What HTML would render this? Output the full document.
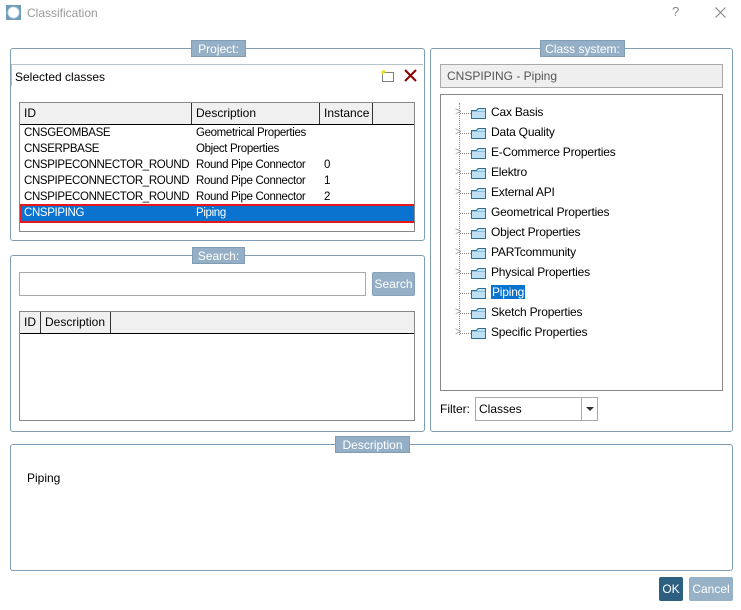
<!DOCTYPE html>
<html><head><style>
*{margin:0;padding:0;box-sizing:border-box}
body{width:741px;height:610px;background:#fff;font-family:"Liberation Sans",sans-serif;font-size:12px;color:#000;position:relative;overflow:hidden}
.a{position:absolute}
.panel{position:absolute;border:1px solid #7f9db3;border-radius:3px}
.leg{position:absolute;background:#95b0c6;color:#fff;font-size:12px;text-align:center;line-height:17px;height:17px;border:1px solid #7f9db3}
.t{position:absolute;white-space:nowrap;line-height:14px}
.tb .t{font-size:11.5px;letter-spacing:-0.35px}
.hd{position:absolute;background:#f0f0f0;border-right:1px solid #333;height:21px;line-height:21px;padding-left:4px;top:0}
.tree .t{left:50px;letter-spacing:-0.2px}
.fold{position:absolute;left:30px;width:15px;height:12px}
.chev{position:absolute;left:14px;color:#999;font-size:11px}
.dot{position:absolute;left:19px;width:11px;border-top:1px dotted #888}
</style></head><body>
<svg width="0" height="0" style="position:absolute"><defs><symbol id="f" viewBox="0 0 15 12"><path d="M0.5 3.5 L0.5 11.5 L14.5 11.5 L14.5 1.5 L7 1.5 L5.5 3.5 Z" fill="#bfe0f3" stroke="#2f6e95"/><path d="M1 4.5 H14" stroke="#8bc0de"/></symbol></defs></svg>
<svg class="a" style="left:6px;top:5px" width="15" height="15"><rect width="15" height="15" fill="#6e9bb8"/><circle cx="7.5" cy="7.5" r="5.5" fill="#fff" stroke="#cfdde6"/></svg>
<div class="t" style="left:27px;top:6px;color:#999;font-size:12px">Classification</div>
<div class="t" style="left:672px;top:5px;color:#888;font-size:13px">?</div>
<svg class="a" style="left:715px;top:7px" width="11" height="11"><path d="M0.5 0.5 L10.5 10.5 M10.5 0.5 L0.5 10.5" stroke="#888" stroke-width="1.2"/></svg>

<!-- Project -->
<div class="panel" style="left:10px;top:48px;width:415px;height:193px"></div>
<div class="leg" style="left:191px;top:40px;width:55px">Project:</div>
<div class="a" style="left:11px;top:64px;width:412px;border-top:1px solid #b8c4cc"></div>
<div class="a" style="left:11px;top:64px;height:22px;border-left:1px solid #b8c4cc"></div>
<div class="t" style="left:15px;top:70px">Selected classes</div>
<svg class="a" style="left:380px;top:69px" width="15" height="14"><rect x="2.5" y="3.5" width="11" height="9" fill="none" stroke="#000" stroke-dasharray="1 1"/><path d="M3 1 L4 4 M1 3 L6 3 M1.5 5.5 L5 1.5" stroke="#f0e000" stroke-width="1.2"/></svg>
<svg class="a" style="left:404px;top:69px" width="13" height="13"><path d="M1 1 L12 12 M12 1 L1 12" stroke="#8b0000" stroke-width="2"/></svg>
<div class="a tb" style="left:19px;top:102px;width:396px;height:130px;border:1px solid #888;overflow:hidden">
 <div class="a" style="left:0;top:0;width:396px;height:22px;background:#f0f0f0;border-bottom:1px solid #000"></div>
 <div class="hd" style="left:0;width:172px">ID</div>
 <div class="hd" style="left:172px;width:128px">Description</div>
 <div class="hd" style="left:300px;width:53px">Instance</div>
 <div class="t" style="left:4px;top:23px">CNSGEOMBASE</div><div class="t" style="left:176px;top:23px">Geometrical Properties</div>
 <div class="t" style="left:4px;top:39px">CNSERPBASE</div><div class="t" style="left:176px;top:39px">Object Properties</div>
 <div class="t" style="left:4px;top:55px">CNSPIPECONNECTOR_ROUND</div><div class="t" style="left:176px;top:55px">Round Pipe Connector</div><div class="t" style="left:304px;top:55px">0</div>
 <div class="t" style="left:4px;top:71px">CNSPIPECONNECTOR_ROUND</div><div class="t" style="left:176px;top:71px">Round Pipe Connector</div><div class="t" style="left:304px;top:71px">1</div>
 <div class="t" style="left:4px;top:87px">CNSPIPECONNECTOR_ROUND</div><div class="t" style="left:176px;top:87px">Round Pipe Connector</div><div class="t" style="left:304px;top:87px">2</div>
 <div class="a" style="left:-1px;top:101px;width:397px;height:19px;background:#0a73d0;border:2px solid #e8161b"></div>
 <div class="t" style="left:4px;top:103px;color:#fff">CNSPIPING</div><div class="t" style="left:176px;top:103px;color:#fff">Piping</div>
</div>

<!-- Search -->
<div class="panel" style="left:10px;top:255px;width:415px;height:177px"></div>
<div class="leg" style="left:192px;top:247px;width:53px">Search:</div>
<div class="a" style="left:19px;top:272px;width:347px;height:24px;border:1px solid #aaa"></div>
<div class="a" style="left:372px;top:272px;width:43px;height:24px;background:#95b0c6;border:1px solid #86a2b8;border-radius:2px;color:#fff;text-align:center;line-height:22px">Search</div>
<div class="a" style="left:19px;top:311px;width:396px;height:110px;border:1px solid #888;overflow:hidden">
 <div class="a" style="left:0;top:0;width:396px;height:22px;background:#f0f0f0;border-bottom:1px solid #000"></div>
 <div class="hd" style="left:0;width:21px">ID</div>
 <div class="hd" style="left:21px;width:70px">Description</div>
</div>

<!-- Class system -->
<div class="panel" style="left:430px;top:48px;width:303px;height:384px"></div>
<div class="leg" style="left:540px;top:40px;width:85px">Class system:</div>
<div class="a" style="left:440px;top:64px;width:283px;height:24px;background:#efefef;border:1px solid #aaa;color:#555;padding-left:6px;line-height:22px">CNSPIPING - Piping</div>
<div class="a tree" style="left:440px;top:94px;width:283px;height:297px;border:1px solid #888">
 <div class="a" style="left:18px;top:8px;height:232px;border-left:1px dotted #888"></div>
 <div class="chev" style="top:11px">&gt;</div><div class="dot" style="top:18px"></div><svg class="fold" style="top:12px"><use href="#f"/></svg><div class="t" style="top:10px">Cax Basis</div>
 <div class="chev" style="top:31px">&gt;</div><div class="dot" style="top:38px"></div><svg class="fold" style="top:32px"><use href="#f"/></svg><div class="t" style="top:30px">Data Quality</div>
 <div class="chev" style="top:51px">&gt;</div><div class="dot" style="top:58px"></div><svg class="fold" style="top:52px"><use href="#f"/></svg><div class="t" style="top:50px">E-Commerce Properties</div>
 <div class="chev" style="top:71px">&gt;</div><div class="dot" style="top:78px"></div><svg class="fold" style="top:72px"><use href="#f"/></svg><div class="t" style="top:70px">Elektro</div>
 <div class="chev" style="top:91px">&gt;</div><div class="dot" style="top:98px"></div><svg class="fold" style="top:92px"><use href="#f"/></svg><div class="t" style="top:90px">External API</div>
 <div class="dot" style="top:118px"></div><svg class="fold" style="top:112px"><use href="#f"/></svg><div class="t" style="top:110px">Geometrical Properties</div>
 <div class="chev" style="top:131px">&gt;</div><div class="dot" style="top:138px"></div><svg class="fold" style="top:132px"><use href="#f"/></svg><div class="t" style="top:130px">Object Properties</div>
 <div class="chev" style="top:151px">&gt;</div><div class="dot" style="top:158px"></div><svg class="fold" style="top:152px"><use href="#f"/></svg><div class="t" style="top:150px">PARTcommunity</div>
 <div class="chev" style="top:171px">&gt;</div><div class="dot" style="top:178px"></div><svg class="fold" style="top:172px"><use href="#f"/></svg><div class="t" style="top:170px">Physical Properties</div>
 <div class="dot" style="top:198px"></div><svg class="fold" style="top:192px"><use href="#f"/></svg><div class="t" style="top:190px;background:#0a73d0;color:#fff;padding:0 1px">Piping</div>
 <div class="chev" style="top:211px">&gt;</div><div class="dot" style="top:218px"></div><svg class="fold" style="top:212px"><use href="#f"/></svg><div class="t" style="top:210px">Sketch Properties</div>
 <div class="chev" style="top:231px">&gt;</div><div class="dot" style="top:238px"></div><svg class="fold" style="top:232px"><use href="#f"/></svg><div class="t" style="top:230px">Specific Properties</div>
</div>
<div class="t" style="left:440px;top:402px">Filter:</div>
<div class="a" style="left:475px;top:397px;width:123px;height:24px;border:1px solid #aaa;padding-left:3px;line-height:22px">Classes</div>
<div class="a" style="left:581px;top:398px;height:22px;border-left:1px solid #aaa"></div>
<div class="a" style="left:586px;top:407px;border-left:4px solid transparent;border-right:4px solid transparent;border-top:4px solid #333"></div>

<!-- Description -->
<div class="panel" style="left:10px;top:444px;width:723px;height:127px"></div>
<div class="leg" style="left:335px;top:436px;width:75px">Description</div>
<div class="t" style="left:27px;top:471px">Piping</div>

<div class="a" style="left:659px;top:577px;width:24px;height:24px;background:#2d5f80;border-radius:2px;color:#fff;text-align:center;line-height:24px">OK</div>
<div class="a" style="left:689px;top:577px;width:44px;height:24px;background:#97b1c6;border-radius:2px;color:#fff;text-align:center;line-height:24px">Cancel</div>
</body></html>
